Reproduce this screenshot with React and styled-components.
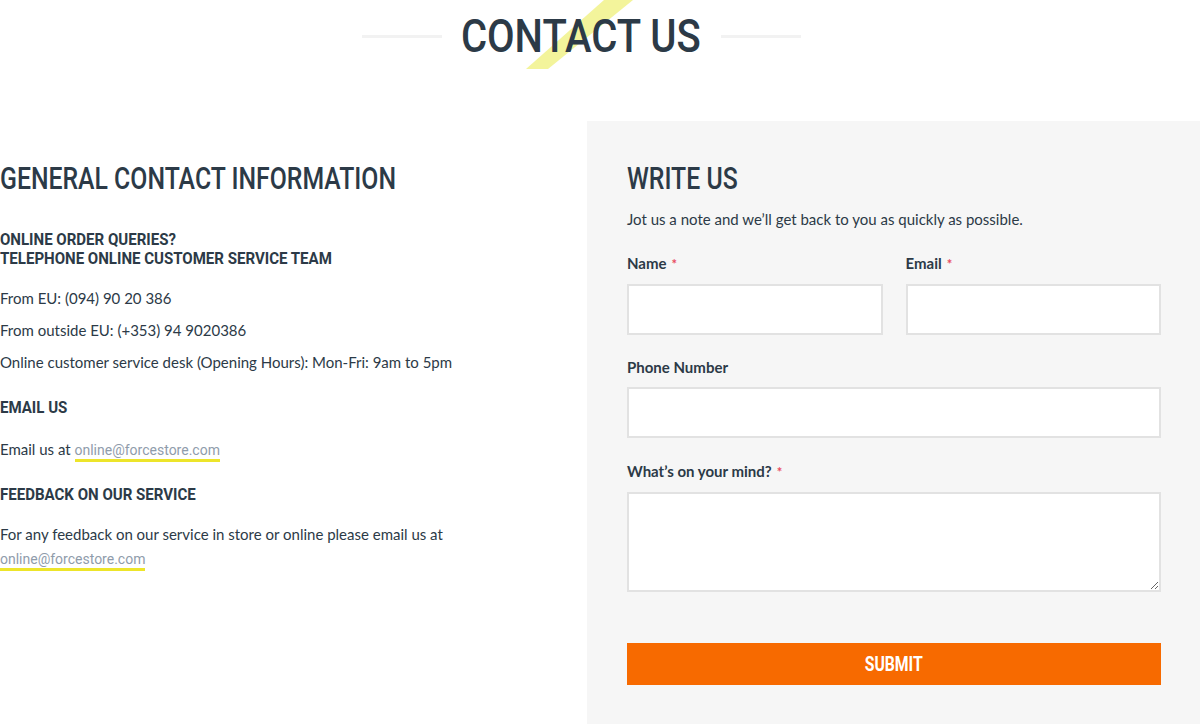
import styled, { createGlobalStyle } from "styled-components";

const GlobalStyle = createGlobalStyle`
  html, body {
    margin: 0;
    padding: 0;
    background: #ffffff;
  }
  body {
    font-family: "Lato", "Noto Sans", sans-serif;
    color: #2c3a47;
  }
  * {
    box-sizing: border-box;
  }
`;

// no condensed face installed, so Roboto is narrowed by hand
const heading = `"Roboto", "Liberation Sans", sans-serif`;

const Page = styled.div`
  width: 1200px;
  height: 724px;
  overflow: hidden;
`;

const TitleRow = styled.div`
  position: relative;
  width: 1162px;
  height: 121px;
  display: flex;
  justify-content: center;
  align-items: flex-start;
  gap: 21px;
  padding-top: 11px;
`;

const Stripe = styled.svg`
  position: absolute;
  left: 0;
  top: 0;
  z-index: 0;
`;

const TitleLine = styled.span`
  width: 80px;
  height: 3px;
  margin-top: 24px;
  background: #f2f2f2;
  position: relative;
  z-index: 1;
`;

const Title = styled.h1`
  position: relative;
  z-index: 1;
  width: 237px;
  margin: 0;
  display: flex;
  justify-content: center;
  white-space: nowrap;
  font-family: ${heading};
  font-weight: 500;
  font-size: 46px;
  line-height: 50px;
  color: #2c3a47;

  & > span {
    display: inline-block;
    transform: scaleX(0.87);
  }
`;

const Columns = styled.div`
  display: grid;
  grid-template-columns: 587px 613px;
  height: 603px;
`;

const InfoCol = styled.div`
  padding-top: 40px;
`;

const FormCol = styled.div`
  background: #f6f6f6;
  padding: 40px 39px 0 40px;
`;

const SectionTitle = styled.h2`
  margin: 0;
  font-family: ${heading};
  font-weight: 500;
  font-size: 31px;
  line-height: 36px;
  color: #2c3a47;
  white-space: nowrap;
  transform: scaleX(0.8);
  transform-origin: left center;
`;

const SubTitle = styled.h3`
  margin: ${p => p.$top || 0}px 0 0;
  font-family: ${heading};
  font-weight: 700;
  font-size: 16px;
  line-height: 19px;
  color: #2c3a47;
  white-space: nowrap;
  transform: scaleX(0.94);
  transform-origin: left center;
`;

const Text = styled.p`
  margin: ${p => p.$top || 0}px 0 0;
  font-size: 15px;
  line-height: 24px;
  color: #2c3a47;
`;

const Mail = styled.a`
  font-family: "Roboto", "Noto Sans", sans-serif;
  font-size: 14px;
  color: #8f9cab;
  text-decoration: none;
  border-bottom: 3px solid #ede52a;
  padding-bottom: 1px;
`;

const Intro = styled.p`
  margin: 10px 0 0;
  font-size: 15px;
  line-height: 24px;
  color: #2c3a47;
`;

const FieldRow = styled.div`
  display: grid;
  grid-template-columns: 1fr 1fr;
  gap: 23px;
  margin-top: ${p => p.$top || 0}px;
`;

const Field = styled.div`
  display: flex;
  flex-direction: column;
  margin-top: ${p => p.$top || 0}px;
`;

const Label = styled.label`
  font-size: 15px;
  font-weight: 700;
  line-height: 20px;
  color: #2c3a47;
  margin-bottom: 10px;
  span {
    color: #e84a5f;
    margin-left: 5px;
    font-size: 13px;
  }
`;

const Input = styled.input`
  height: 51px;
  width: 100%;
  border: 2px solid #e2e2e2;
  background: #ffffff;
  outline: none;
`;

const Area = styled.textarea`
  height: 100px;
  width: 100%;
  border: 2px solid #e2e2e2;
  background: #ffffff;
  outline: none;
  resize: vertical;
`;

const Submit = styled.button`
  margin-top: 51px;
  width: 100%;
  height: 42px;
  border: none;
  background: #f76a00;
  color: #ffffff;
  font-family: ${heading};
  font-weight: 700;
  font-size: 21px;
  cursor: pointer;

  & > span {
    display: inline-block;
    transform: scaleX(0.75);
  }
`;

export default function App() {
  return (
    <Page>
      <GlobalStyle />
      <TitleRow>
        <Stripe width="1162" height="121">
          <polygon points="604,0 633,0 548,69 526,69" fill="#f3f49b" />
        </Stripe>
        <TitleLine />
        <Title>
          <span>CONTACT US</span>
        </Title>
        <TitleLine />
      </TitleRow>
      <Columns>
        <InfoCol>
          <SectionTitle>GENERAL CONTACT INFORMATION</SectionTitle>
          <SubTitle $top={33}>
            ONLINE ORDER QUERIES?
            <br />
            TELEPHONE ONLINE CUSTOMER SERVICE TEAM
          </SubTitle>
          <Text $top={18}>From EU: (094) 90 20 386</Text>
          <Text $top={8}>From outside EU: (+353) 94 9020386</Text>
          <Text $top={8}>Online customer service desk (Opening Hours): Mon-Fri: 9am to 5pm</Text>
          <SubTitle $top={24}>EMAIL US</SubTitle>
          <Text $top={20}>
            Email us at <Mail href="#">online@forcestore.com</Mail>
          </Text>
          <SubTitle $top={23}>FEEDBACK ON OUR SERVICE</SubTitle>
          <Text $top={18}>
            For any feedback on our service in store or online please email us at
            <br />
            <Mail href="#">online@forcestore.com</Mail>
          </Text>
        </InfoCol>
        <FormCol>
          <SectionTitle>WRITE US</SectionTitle>
          <Intro>Jot us a note and we’ll get back to you as quickly as possible.</Intro>
          <FieldRow $top={22}>
            <Field>
              <Label>
                Name<span>*</span>
              </Label>
              <Input type="text" />
            </Field>
            <Field>
              <Label>
                Email<span>*</span>
              </Label>
              <Input type="email" />
            </Field>
          </FieldRow>
          <Field $top={22}>
            <Label>Phone Number</Label>
            <Input type="tel" />
          </Field>
          <Field $top={23}>
            <Label>
              What’s on your mind?<span>*</span>
            </Label>
            <Area />
          </Field>
          <Submit>
            <span>SUBMIT</span>
          </Submit>
        </FormCol>
      </Columns>
    </Page>
  );
}
